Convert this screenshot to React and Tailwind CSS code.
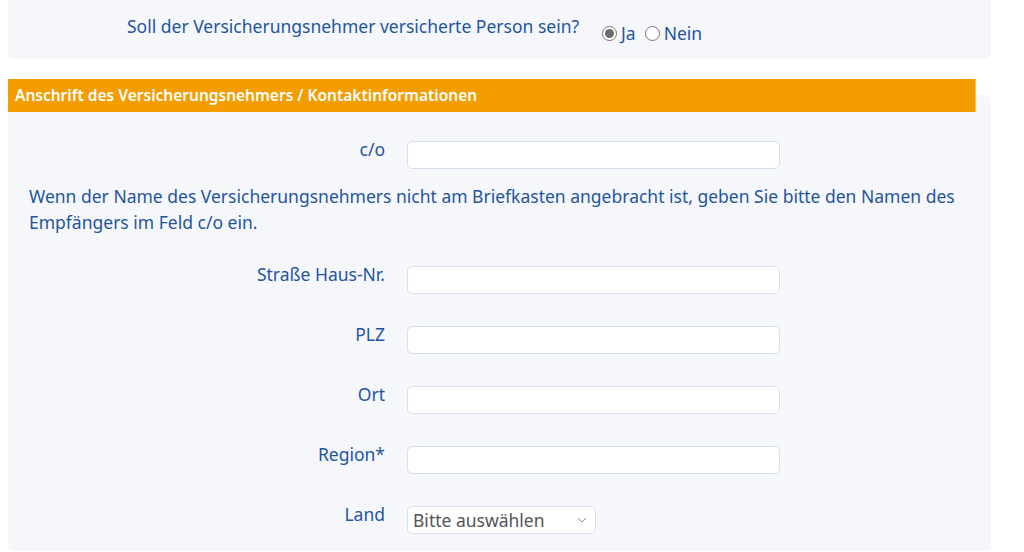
import React, { useState } from "react";

// Felder der Anschrift
const fields = [
  { id: "strasse", label: "Straße Haus-Nr." },
  { id: "plz", label: "PLZ" },
  { id: "ort", label: "Ort" },
  { id: "region", label: "Region*" },
];

const Radio = ({ checked, label, onClick }) => (
  <label className="flex items-center cursor-pointer" onClick={onClick}>
    <span className="w-[15px] h-[15px] rounded-full border border-[#767676] bg-white flex items-center justify-center mr-[4px]">
      {checked && <span className="w-[9px] h-[9px] rounded-full bg-[#6b6b6b]" />}
    </span>
    <span>{label}</span>
  </label>
);

const Row = ({ label, children }) => (
  <div className="flex items-start">
    <div className="w-[377px] text-right leading-6 -mt-1">{label}</div>
    <div className="ml-[22px]">{children}</div>
  </div>
);

const App = () => {
  const [versichert, setVersichert] = useState(true);

  return (
    <div
      className="w-full h-[552px] overflow-hidden bg-white text-[17.5px] text-[#1f55a0]"
      style={{ fontFamily: '"Noto Sans", "Open Sans", sans-serif' }}
    >
      {/* Frage versicherte Person */}
      <div className="ml-2 w-[983px] h-[59px] bg-[#f6f7fb] rounded-b-[5px] flex items-start pl-[119px] pt-[14px]">
        <span className="leading-6">Soll der Versicherungsnehmer versicherte Person sein?</span>
        <div className="flex items-center gap-[9px] ml-[23px] mt-[7px] leading-6">
          <Radio checked={versichert} label="Ja" onClick={() => setVersichert(true)} />
          <Radio checked={!versichert} label="Nein" onClick={() => setVersichert(false)} />
        </div>
      </div>

      {/* Anschrift */}
      <div className="flow-root ml-2 mt-[36px] w-[983px] h-[456px] bg-[#f6f7fb] rounded-[5px]">
        <div className="relative -mt-4 w-[968px] h-[33px] bg-[#f49d00] border-r border-[#f8c063] flex items-center pl-[7px] text-white text-[15.5px] font-semibold">
          Anschrift des Versicherungsnehmers / Kontaktinformationen
        </div>

        <div className="pt-[29px]">
          <Row label="c/o">
            <input className="block w-[373px] h-[28px] rounded-[5px] border border-[#d6def0] bg-white outline-none px-2" />
          </Row>

          <p className="ml-[21px] mt-[14px] w-[941px] leading-[26px]">
            Wenn der Name des Versicherungsnehmers nicht am Briefkasten angebracht ist, geben Sie bitte den Namen des Empfängers im Feld c/o ein.
          </p>

          <div className="mt-[31px] flex flex-col gap-[32px]">
            {fields.map((f) => (
              <Row key={f.id} label={f.label}>
                <input className="block w-[373px] h-[28px] rounded-[5px] border border-[#d6def0] bg-white outline-none px-2" />
              </Row>
            ))}
            <Row label="Land">
              <div className="relative w-[189px] h-[28px]">
                <select
                  defaultValue=""
                  className="appearance-none block w-full h-full rounded-[5px] border border-[#d6def0] bg-white pl-[5px] text-[#555] outline-none"
                >
                  <option value="">Bitte auswählen</option>
                  <option value="de">Deutschland</option>
                  <option value="at">Österreich</option>
                  <option value="ch">Schweiz</option>
                </select>
                <svg
                  className="absolute right-[9px] top-[11px] pointer-events-none"
                  width="10"
                  height="6"
                  viewBox="0 0 10 6"
                  fill="none"
                  stroke="#8a8a8a"
                  strokeWidth="1"
                >
                  <path d="M1 1l4 4 4-4" />
                </svg>
              </div>
            </Row>
          </div>
        </div>
      </div>
    </div>
  );
};

export default App;
